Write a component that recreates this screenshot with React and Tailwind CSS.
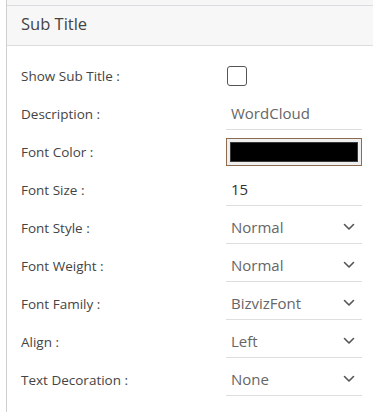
const rows = [
  { label: "Font Size :", value: "15", select: false, dark: true },
  { label: "Font Style :", value: "Normal", select: true },
  { label: "Font Weight :", value: "Normal", select: true },
  { label: "Font Family :", value: "BizvizFont", select: true },
  { label: "Align :", value: "Left", select: true },
  { label: "Text Decoration :", value: "None", select: true },
];

function Chevron() {
  return (
    <svg width="12" height="8" viewBox="0 0 12 8" fill="none">
      <path d="M1.5 1.5 L6 6 L10.5 1.5" stroke="#555" strokeWidth="1.6" strokeLinecap="round" strokeLinejoin="round" />
    </svg>
  );
}

function Row({ label, children }) {
  return (
    <div className="flex items-center h-[38px]">
      <div className="w-[205px] text-[13.5px] text-[#444]">{label}</div>
      <div className="w-[136px]">{children}</div>
    </div>
  );
}

function ValueBox({ value, select, dark }) {
  return (
    <div className="flex items-center justify-between h-[28px] pl-[5px] pr-[7px] pb-[4px] border-b border-[#dedede] mt-[3px]">
      <span className={dark ? "text-[15px] text-[#333]" : "text-[15px] text-[#666]"}>{value}</span>
      {select && <Chevron />}
    </div>
  );
}

export default function App() {
  return (
    <div className="w-[373px] h-[412px] bg-white" style={{ fontFamily: "'Open Sans', 'Noto Sans', sans-serif" }}>
      <div className="ml-[6px] h-full border-l border-[#cfcfcf]">
        <div className="h-[6px] bg-[#f6f6f6] border-b border-[#d9dde2]" />
        <div className="h-[40px] bg-[#f7f7f7] border-b border-[#dcdcdc] pl-[14px] pb-[3px] flex items-center text-[16.5px] text-[#444]">
          Sub Title
        </div>

        <div className="pl-[14px] pt-[11px]">
          <Row label="Show Sub Title :">
            <div className="ml-[1px] w-[20px] h-[20px] border-[1.5px] border-[#555] rounded-[3px] bg-white" />
          </Row>
          <Row label="Description :">
            <ValueBox value="WordCloud" />
          </Row>
          <Row label="Font Color :">
            <div className="h-[28px] border border-[#8e6c52] bg-[#efefef] p-[3px]">
              <div className="h-full bg-black border border-[#3a3a3a]" />
            </div>
          </Row>
          {rows.map((r) => (
            <Row key={r.label} label={r.label}>
              <ValueBox value={r.value} select={r.select} dark={r.dark} />
            </Row>
          ))}
        </div>
      </div>
    </div>
  );
}
